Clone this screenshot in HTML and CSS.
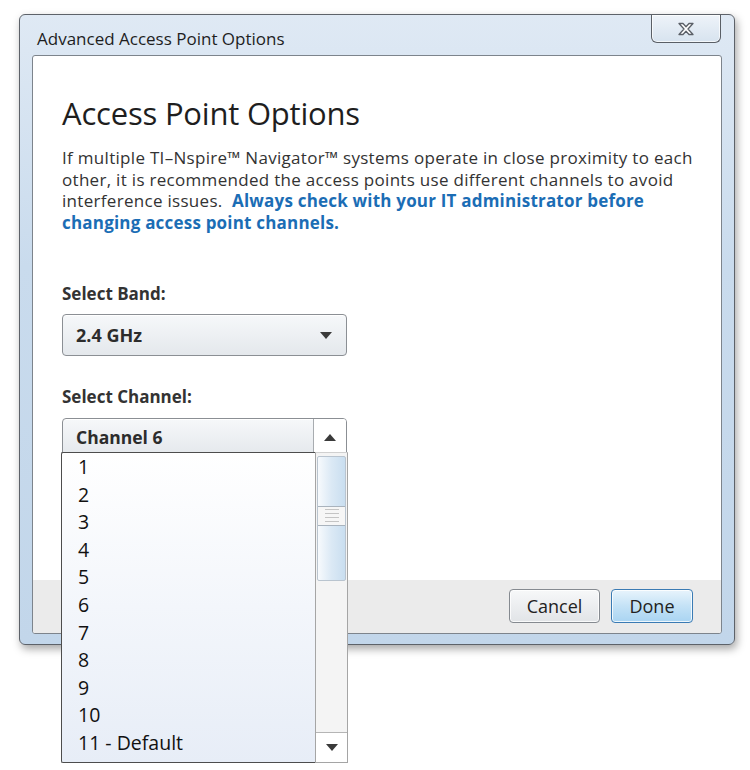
FILE: index.html
```html
<!DOCTYPE html>
<html>
<head>
<meta charset="utf-8">
<title>Advanced Access Point Options</title>
<link rel="stylesheet" href="styles.css">
</head>
<body>
<div class="window">
  <div class="titlebar">
    <span class="title">Advanced Access Point Options</span>
    <div class="close">
      <svg width="18" height="14" viewBox="0 0 18 14"><path d="M2 1.5h4l3 3.3 3-3.3h4l-5 5.5 5 5.5h-4l-3-3.3-3 3.3H2l5-5.5z" fill="#fff" stroke="#5b6068" stroke-width="1.3" stroke-linejoin="round"/></svg>
    </div>
  </div>
  <div class="client">
    <div class="content">
      <h1 class="heading">Access Point Options</h1>
      <p class="intro">If multiple TI–Nspire™ Navigator™ systems operate in close proximity to each<br>other, it is recommended the access points use different channels to avoid<br>interference issues.&nbsp; <span class="note">Always check with your IT administrator before<br>changing access point channels.</span></p>
      <div class="label">Select Band:</div>
      <div class="select">
        <span class="select-text">2.4 GHz</span>
        <span class="tri"></span>
      </div>
      <div class="label label-channel">Select Channel:</div>
      <div class="select select-channel">
        <span class="select-text">Channel 6</span>
        <span class="spin-up"><span class="tri tri-up"></span></span>
      </div>
    </div>
    <div class="footer">
      <button class="btn">Cancel</button>
      <button class="btn btn-primary">Done</button>
    </div>
  </div>
</div>
<div class="popup">
  <ul class="list">
    <li>1</li><li>2</li><li>3</li><li>4</li><li>5</li><li>6</li><li>7</li><li>8</li><li>9</li><li>10</li><li>11 - Default</li>
  </ul>
  <div class="scrollbar">
    <div class="thumb"><span class="grip"></span></div>
    <div class="track"></div>
    <div class="down"><span class="tri"></span></div>
  </div>
</div>
</body>
</html>
```
FILE: styles.css
```css
html, body {
  margin: 0;
  padding: 0;
  background: #fff;
}
body {
  font-family: "Open Sans", "Noto Sans", sans-serif;
  color: #2b2b2b;
  position: relative;
  width: 750px;
  height: 770px;
  overflow: hidden;
}
.window {
  margin: 14px 0 0 19px;
  width: 716px;
  height: 631px;
  box-sizing: border-box;
  border: 1px solid #5d6269;
  border-radius: 6px;
  background: linear-gradient(#dfe9f4, #c9dbed 40%, #c2d6ea);
  box-shadow: 2px 4px 8px rgba(0, 0, 0, 0.35);
  display: flex;
  flex-direction: column;
}
.titlebar {
  height: 40px;
  display: flex;
  align-items: flex-start;
  flex: none;
}
.title {
  font-size: 17px;
  line-height: 22px;
  color: #1e1e1e;
  padding: 13px 0 0 17px;
  letter-spacing: 0;
}
.close {
  margin-left: auto;
  margin-right: 13px;
  width: 70px;
  height: 28px;
  box-sizing: border-box;
  border: 1px solid #5a5f66;
  border-top: none;
  border-radius: 0 0 6px 6px;
  background: linear-gradient(#eef3f9, #d7e3ef);
  display: flex;
  align-items: center;
  justify-content: center;
  box-shadow: inset 0 0 0 1px rgba(255,255,255,0.7);
}
.client {
  flex: 1;
  margin: 0 12px 10px 12px;
  border: 1px solid #7d848c;
  border-radius: 3px;
  background: #fff;
  display: flex;
  flex-direction: column;
  overflow: hidden;
}
.content {
  flex: 1;
  padding: 0 0 0 29px;
}
.heading {
  margin: 38px 0 0 0;
  font-size: 31px;
  font-weight: 400;
  line-height: 38px;
  color: #1e1e1e;
  letter-spacing: -0.2px;
}
.intro {
  margin: 15px 0 0 0;
  font-size: 17px;
  line-height: 21.5px;
  color: #333;
  letter-spacing: 0.3px;
  white-space: nowrap;
}
.note {
  color: #1b6db5;
  font-weight: 700;
  letter-spacing: 0.2px;
}
.label {
  margin-top: 51px;
  font-size: 17px;
  font-weight: 700;
  color: #333;
  line-height: 20px;
}
.label-channel {
  margin-top: 31px;
}
.select {
  margin-top: 10px;
  width: 285px;
  height: 42px;
  box-sizing: border-box;
  border: 1px solid #8b8f94;
  border-radius: 4px;
  background: linear-gradient(#f6f8fa, #e4e8ec);
  display: flex;
  align-items: center;
  padding-left: 13px;
  padding-right: 14px;
  box-shadow: inset 0 1px 0 #fff;
}
.select-text {
  font-size: 18px;
  font-weight: 700;
  color: #2c2c2c;
  flex: 1;
}
.tri {
  width: 0;
  height: 0;
  border-left: 6px solid transparent;
  border-right: 6px solid transparent;
  border-top: 7px solid #3a3a3a;
}
.tri-up {
  border-top: none;
  border-bottom: 7px solid #3a3a3a;
}
.select-channel {
  margin-top: 11px;
  height: 38px;
  padding-right: 0;
  border-radius: 4px 4px 0 0;
  overflow: hidden;
}
.select-channel .select-text {
  font-size: 17.5px;
}
.spin-up {
  width: 32px;
  align-self: stretch;
  border-left: 1px solid #a8acb0;
  background: #fff;
  display: flex;
  align-items: center;
  justify-content: center;
}
.footer {
  flex: none;
  height: 53px;
  background: #ebebeb;
  display: flex;
  align-items: center;
  justify-content: flex-end;
  gap: 11px;
  padding-right: 28px;
  padding-bottom: 2px;
  box-sizing: border-box;
}
.btn {
  height: 34px;
  padding: 0;
  font-family: "Open Sans", "Noto Sans", sans-serif;
  font-size: 18px;
  color: #222;
  border: 1px solid #858a90;
  border-radius: 4px;
  background: linear-gradient(#f7f8f9, #e1e4e7);
  box-shadow: inset 0 0 0 1px rgba(255,255,255,0.8);
}
.btn:first-child {
  width: 91px;
}
.btn-primary {
  width: 82px;
  border-color: #3a7bb4;
  background: linear-gradient(#e8f4fc, #c4e2f6 50%, #a9d4f2);
}
.popup {
  position: absolute;
  left: 61px;
  top: 452px;
  width: 287px;
  height: 311px;
  display: flex;
}
.list {
  list-style: none;
  margin: 0;
  padding: 0;
  width: 254px;
  box-sizing: border-box;
  border: 1px solid #4d4d4d;
  border-right: none;
  border-radius: 2px 0 0 2px;
  background: linear-gradient(#ffffff, #e7edf7);
}
.list li {
  font-size: 19.5px;
  line-height: 27.6px;
  padding-left: 16px;
  color: #111;
}
.scrollbar {
  width: 33px;
  box-sizing: border-box;
  border: 1px solid #a5a5a5;
  border-top: 1px solid #d0d0d0;
  background: #f4f4f4;
  display: flex;
  flex-direction: column;
  padding-top: 3px;
}
.thumb {
  height: 125px;
  margin: 0 1px;
  box-sizing: border-box;
  border: 1px solid #b9c4cf;
  border-radius: 2px;
  background: linear-gradient(90deg, #f7fafd, #dbe9f5 50%, #c9def0);
  display: flex;
  align-items: center;
  justify-content: center;
}
.grip {
  width: 28px;
  height: 18px;
  background:
    repeating-linear-gradient(#c4c4c4 0 1px, transparent 1px 4px) center / 14px 13px no-repeat,
    #f6f6f6;
  border-top: 1px solid #a9b3bd;
  border-bottom: 1px solid #a9b3bd;
  margin-top: -6px;
}
.track {
  flex: 1;
}
.down {
  height: 29px;
  background: #fff;
  border-top: 1px solid #b5b5b5;
  display: flex;
  align-items: center;
  justify-content: center;
}
```
